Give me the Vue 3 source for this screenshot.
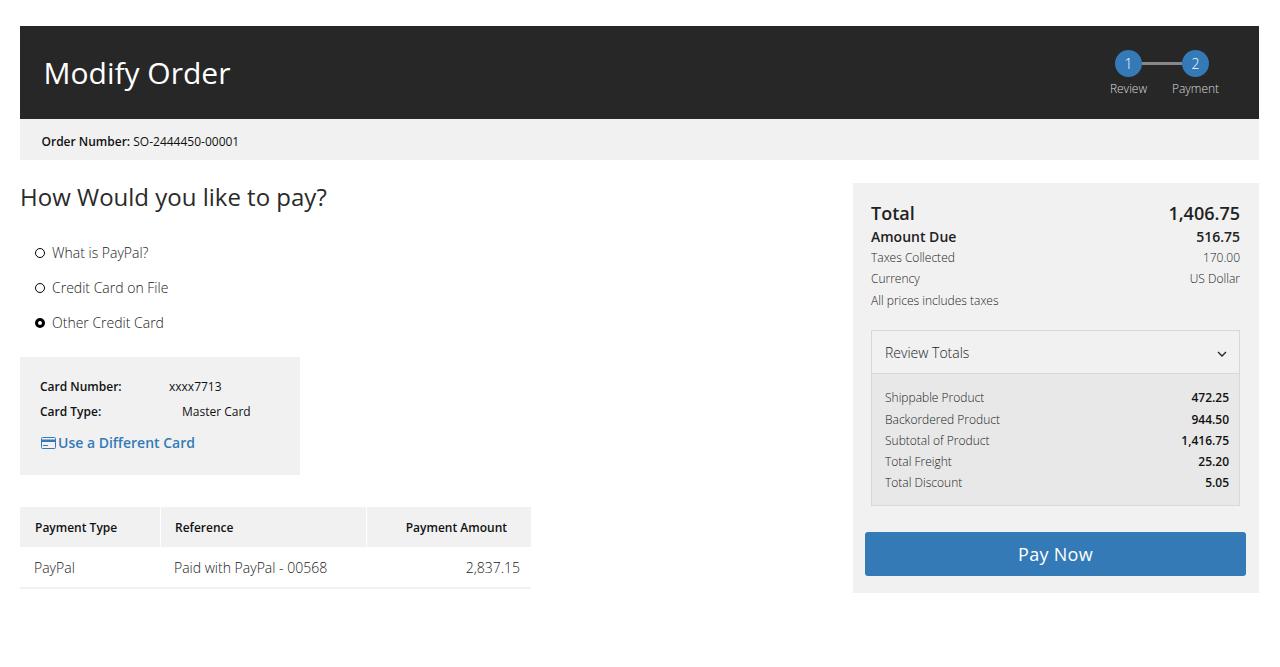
<script setup>
const payOptions = [
  { label: 'What is PayPal?', on: false },
  { label: 'Credit Card on File', on: false },
  { label: 'Other Credit Card', on: true }
]
const reviewRows = [
  ['Shippable Product', '472.25'],
  ['Backordered Product', '944.50'],
  ['Subtotal of Product', '1,416.75'],
  ['Total Freight', '25.20'],
  ['Total Discount', '5.05']
]
</script>

<template>
  <div class="page">
    <header class="head">
      <h1>Modify Order</h1>
      <div class="steps">
        <div class="step"><span class="dot">1</span><span class="lbl">Review</span></div>
        <span class="line"></span>
        <div class="step"><span class="dot">2</span><span class="lbl">Payment</span></div>
      </div>
    </header>
    <div class="order"><b>Order Number:</b> SO-2444450-00001</div>
    <div class="main">
      <section class="left">
        <h2>How Would you like to pay?</h2>
        <div class="opts">
          <div v-for="o in payOptions" :key="o.label" class="opt">
            <span class="radio" :class="{ on: o.on }"></span>{{ o.label }}
          </div>
        </div>
        <div class="card">
          <div class="cr"><b>Card Number:</b><span class="n1">xxxx7713</span></div>
          <div class="cr"><b>Card Type:</b><span class="n2">Master Card</span></div>
          <a class="diff">
            <svg width="15" height="12" viewBox="0 0 15 12"><rect x="0.5" y="0.5" width="14" height="11" rx="1" fill="none" stroke="#337ab7"/><rect x="1" y="2.5" width="13" height="2.5" fill="#337ab7"/><rect x="2" y="8" width="5" height="1" fill="#337ab7"/></svg>
            Use a Different Card
          </a>
        </div>
        <div class="tbl">
          <div class="thead">
            <div class="c1">Payment Type</div>
            <div class="c2">Reference</div>
            <div class="c3">Payment Amount</div>
          </div>
          <div class="tbody">
            <div class="c1">PayPal</div>
            <div class="c2">Paid with PayPal - 00568</div>
            <div class="c3">2,837.15</div>
          </div>
        </div>
      </section>
      <aside class="side">
        <div class="sr total"><span>Total</span><span>1,406.75</span></div>
        <div class="sr due"><span>Amount Due</span><span>516.75</span></div>
        <div class="sr small"><span>Taxes Collected</span><span>170.00</span></div>
        <div class="sr small"><span>Currency</span><span>US Dollar</span></div>
        <div class="sr small"><span>All prices includes taxes</span></div>
        <div class="review">
          <div class="rhead"><span>Review Totals</span>
            <svg class="chev" width="10" height="6" viewBox="0 0 10 6"><path d="M1 1l4 4 4-4" fill="none" stroke="#222" stroke-width="1.3"/></svg>
          </div>
          <div class="rbody">
            <div v-for="r in reviewRows" :key="r[0]" class="rr"><span>{{ r[0] }}</span><b>{{ r[1] }}</b></div>
          </div>
        </div>
        <button class="pay">Pay Now</button>
      </aside>
    </div>
  </div>
</template>

<style>
body { margin: 0; background: #fff; }
</style>
<style scoped>
.page { padding: 26px 21px 0 20px; font-family: "Open Sans", sans-serif; color: #222; font-weight: 300; }
b { font-weight: 600; color: #111; }
.head { background: #272727; height: 93px; display: flex; justify-content: space-between; align-items: center; padding: 0 50px 0 23.5px; box-sizing: border-box; color: #fff; }
h1 { margin: 0; font-size: 30px; font-weight: 400; }
.steps { display: flex; align-items: flex-start; margin-top: 1px; }
.step { display: flex; flex-direction: column; align-items: center; width: 27px; }
.dot { width: 27px; height: 27px; flex: none; border-radius: 50%; background: #337ab7; display: flex; align-items: center; justify-content: center; font-size: 14px; font-weight: 300; }
.lbl { font-size: 12px; margin-top: 3px; color: #ddd; line-height: 17px; white-space: nowrap; }
.line { width: 40px; height: 3px; margin: 12px 0 0; background: #888; }
.order { background: #f1f1f1; height: 41px; line-height: 45px; padding-left: 21.5px; font-size: 12px; font-weight: 400; color: #111; }
.main { display: flex; justify-content: space-between; align-items: flex-start; margin-top: 23px; }
.left { width: 511px; }
h2 { margin: 0; font-size: 24px; font-weight: 400; line-height: 28px; color: #2a2a2a; }
.opts { margin-top: 24px; }
.opt { display: flex; align-items: center; height: 35px; padding-left: 15px; font-size: 14px; }
.radio { width: 10px; height: 10px; box-sizing: border-box; border: 1.5px solid #000; border-radius: 50%; margin-right: 7px; background: #fff; }
.radio.on { border-width: 3px; }
.card { width: 280px; height: 118px; background: #f1f1f1; margin-top: 17px; padding: 17px 20px 0; box-sizing: border-box; font-size: 12px; font-weight: 400; color: #111; }
.cr { height: 25px; line-height: 25px; display: flex; }
.cr b { width: 129px; flex: none; }
.n2 { margin-left: 13px; }
.diff { display: flex; align-items: center; gap: 2px; color: #337ab7; font-weight: 600; font-size: 14px; margin: 9px 0 0 1px; }
.tbl { margin-top: 32px; }
.thead { display: flex; height: 40px; background: #f1f1f1; font-size: 12px; font-weight: 600; align-items: center; color: #111; }
.tbody { display: flex; height: 42px; align-items: center; font-size: 14px; box-sizing: border-box; }
.c1 { width: 141px; padding-left: 14px; box-sizing: border-box; }
.c2 { width: 206px; padding-left: 13px; box-sizing: border-box; }
.c3 { width: 164px; text-align: right; padding-right: 11px; box-sizing: border-box; }
.thead .c1, .thead .c2 { border-right: 1px solid #fff; height: 100%; display: flex; align-items: center; }
.thead .c1 { padding-left: 15px; }
.thead .c2 { padding-left: 14px; }
.thead .c3 { padding-right: 24px; }
.tbody .c1, .tbody .c2, .tbody .c3 { height: 100%; line-height: 42px; border-bottom: 2px solid #f1f1f1; border-right: 1px solid #fff; }
.tbody .c3 { border-right: 0; }
.side { width: 406px; height: 410px; background: #f1f1f1; padding: 17px 19px 0 18px; box-sizing: border-box; }
.sr { display: flex; justify-content: space-between; }
.total { font-size: 18px; font-weight: 600; line-height: 26px; }
.due { font-size: 14px; font-weight: 600; line-height: 22px; }
.small { font-size: 12px; line-height: 21.3px; }
.small:nth-child(3) { margin-top: -1px; }
.review { margin-top: 19.6px; border: 1px solid #d8d8d8; }
.rhead { height: 42px; display: flex; justify-content: space-between; align-items: center; padding: 0 12px 0 13px; font-size: 14px; border-bottom: 1px solid #d8d8d8; }
.chev { margin-top: 3px; }
.rbody { background: #e8e8e8; padding: 13px 10px 11px 13px; font-size: 12px; }
.rr { display: flex; justify-content: space-between; line-height: 21.2px; }
.pay { display: block; width: 381px; height: 44px; margin: 26px 0 0 -6px; background: #337ab7; border: 0; border-radius: 3px; color: #fff; font-family: inherit; font-size: 18px; font-weight: 500; letter-spacing: 0.3px; }
</style>
